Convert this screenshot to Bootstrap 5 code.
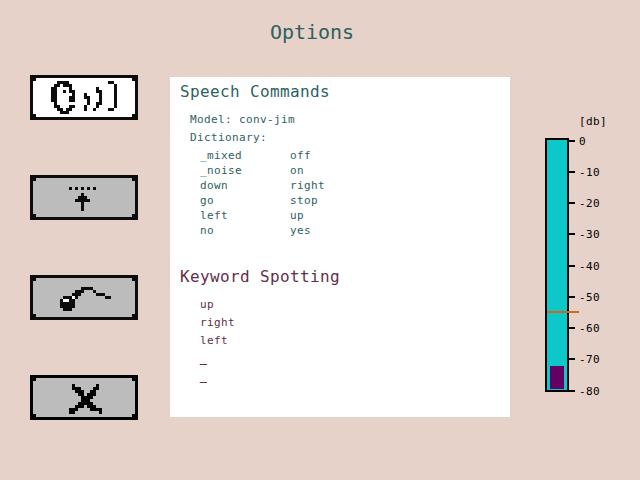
<!DOCTYPE html>
<html lang="en">
<head>
<meta charset="utf-8">
<meta name="viewport" content="width=device-width, initial-scale=1">
<title>Options</title>
<link href="https://cdn.jsdelivr.net/npm/bootstrap@5.3.0/dist/css/bootstrap.min.css" rel="stylesheet">
<style>
body{width:640px;height:480px;background:#e6d2c9;font-family:"DejaVu Sans Mono",monospace;color:#2f5f5f;font-size:11px;line-height:15px;letter-spacing:.378px}
.title{font-size:20px;line-height:24px;letter-spacing:-.04px;padding-top:20px;height:75px;padding-right:16px}
.stage{height:345px}
.menu{width:108px;margin-left:30px}
.pix{display:block;width:108px;height:45px;background:#bcbcbc}
.pix.active{background:#fff}
.panel{width:340px;height:340px;margin:2px 0 0 32px;background:#fff;padding:5px 0 0 10px}
.head{font-size:16px;line-height:20px;letter-spacing:.368px;font-weight:400}
.info{line-height:18px;margin:9px 0 0 10px}
.words{line-height:15px;margin:1px 0 0 10px}
.wordcol{width:90px}
.spot{color:#5f2f48;padding-top:29px}
.keys{line-height:18px;margin:9px 0 0 20px}
.blank{-webkit-text-stroke:.5px #5f2f48}
.meter{margin:38px 0 0 35px;width:80px;height:280px}
.unit{height:25px;padding:1px 0 0 34px;color:#000;line-height:15px}
.gauge{width:24px;height:254px;border:2px solid #000;background:#0cc8c8}
.level{left:3px;bottom:1px;width:14px;height:23px;background:#640064}
.thresh{left:0;top:171px;width:32px;height:2px;background:#d2691e}
.scale{height:265px;margin-top:-4.5px;color:#000}
.tick{height:15px;margin-bottom:16.25px;white-space:nowrap}
.tick:last-child{margin-bottom:0}
.tick::before{content:"";width:6px;height:2px;background:#000;margin:0 4px 1px 0;flex:none}
</style>
</head>
<body class="overflow-hidden">
<h1 class="title text-center fw-normal m-0">Options</h1>
<main class="stage d-flex align-items-start">
<nav class="menu d-flex flex-column justify-content-between h-100" id="menu"></nav>
<section class="panel">
<h2 class="head m-0">Speech Commands</h2>
<div class="info">
<div>Model: conv-jim</div><div>Dictionary:</div>
<div class="words d-flex">
<div class="wordcol"><div>_mixed</div><div>_noise</div><div>down</div><div>go</div><div>left</div><div>no</div></div>
<div class="wordcol"><div>off</div><div>on</div><div>right</div><div>stop</div><div>up</div><div>yes</div></div>
</div></div>
<div class="spot">
<h2 class="head m-0">Keyword Spotting</h2>
<div class="keys"><div>up</div><div>right</div><div>left</div><div class="blank">_</div><div class="blank">_</div></div>
</div>
</section>
<aside class="meter">
<div class="unit">[db]</div>
<div class="d-flex align-items-start">
<div class="gauge position-relative flex-shrink-0"><div class="level position-absolute"></div><div class="thresh position-absolute"></div></div>
<div class="scale">
<div class="tick d-flex align-items-center">0</div><div class="tick d-flex align-items-center">-10</div><div class="tick d-flex align-items-center">-20</div><div class="tick d-flex align-items-center">-30</div><div class="tick d-flex align-items-center">-40</div><div class="tick d-flex align-items-center">-50</div><div class="tick d-flex align-items-center">-60</div><div class="tick d-flex align-items-center">-70</div><div class="tick d-flex align-items-center">-80</div>
</div></div>
</aside>
</main>
<script src="https://cdn.jsdelivr.net/npm/bootstrap@5.3.0/dist/js/bootstrap.bundle.min.js"></script>
<script>
// Pixel icons on a 36x15 grid. Each run is [row, first column, last column, white?].
const icons=[
{name:'Speech',on:true,ink:'#0c0c0c',runs:[[2,9,12],[3,8,9],[3,11,13],[4,7,8],[4,13,13],[5,7,8],[5,11,11],[5,13,14],[6,7,8],[6,14,14],[7,7,8],[7,13,14],[8,7,8],[8,13,14],[9,8,8],[10,8,9],[10,13,14],[11,9,10],[11,12,13],[12,10,12],
[6,18,18],[7,18,19],[8,19,19],[9,19,19],[10,18,18],[11,18,18],[4,22,22],[5,22,23],[6,23,23],[7,23,23],[8,23,23],[9,22,23],[10,22,22],[11,21,21],
[2,26,27],[3,28,28],[4,28,28],[5,28,28],[6,28,28],[7,28,28],[8,28,28],[9,28,28],[10,28,28],[11,26,27]]},
{name:'Up',ink:'#0c0c0c',runs:[[4,13,13],[4,15,15],[4,17,17],[4,19,19],[4,21,21],[6,17,17],[7,16,18],[8,15,19],[9,17,17],[10,17,17],[11,17,17]]},
{name:'Bomb',ink:'#0c0c0c',runs:[[4,17,20],[5,15,17],[5,21,21],[6,14,16],[6,22,24],[7,11,13],[7,14,14,1],[7,15,15],[7,25,26],[8,10,14],[8,11,12,1],[9,10,14],[10,10,14],[11,11,13]]},
{name:'Close',ink:'#000',runs:[[3,14,14],[3,22,22],[4,14,16],[4,21,22],[5,15,17],[5,20,21],[6,16,17],[6,19,21],[7,17,20],[8,17,19],[9,16,20],[10,15,17],[10,19,21],[11,13,15],[11,20,23],[12,13,14],[12,23,23]]}];
const rect=(x,y,w,h,f)=>`<rect x="${x}" y="${y}" width="${w}" height="${h}" fill="${f}"/>`;
document.getElementById('menu').innerHTML=icons.map(i=>`<button class="btn p-0 border-0 rounded-0" aria-label="${i.name}"><svg class="pix ${i.on?'active':''}" viewBox="0 0 36 15" shape-rendering="crispEdges">`+
rect(0,0,36,1,i.ink)+rect(0,14,36,1,i.ink)+rect(0,0,1,15,i.ink)+rect(35,0,1,15,i.ink)+
[[1,1],[34,1],[1,13],[34,13]].map(c=>rect(c[0],c[1],1,1,i.ink)).join('')+
i.runs.map(r=>rect(r[1],r[0],r[2]-r[1]+1,1,r[3]?'#fff':i.ink)).join('')+'</svg></button>').join('');
</script>
</body>
</html>
